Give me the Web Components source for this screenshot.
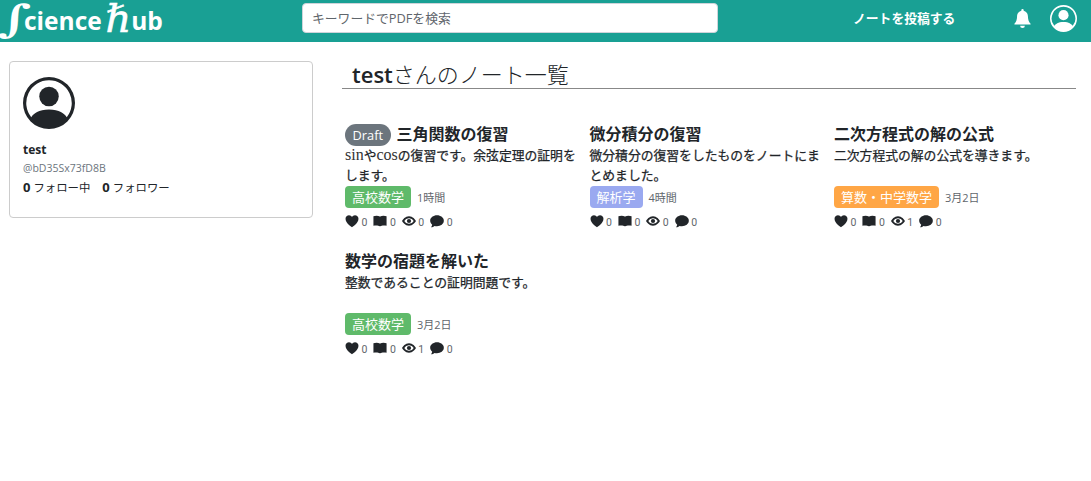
<!DOCTYPE html>
<html lang="ja"><head><meta charset="utf-8"><style>
html,body{margin:0;padding:0;background:#fff}
body{font-family:"Open Sans","Noto Sans CJK JP",sans-serif;color:#212529;width:1091px;height:481px;overflow:hidden}
</style></head><body>
<app-shell>
<app-navbar slot="nav"></app-navbar>
<profile-card slot="side"></profile-card>
<note-list slot="main" heading-name="test">
<note-card draft title-text="三角関数の復習" tag="高校数学" tagc="#5fba6a" time="1時間" views="0" serif>sinやcosの復習です。余弦定理の証明をします。</note-card>
<note-card title-text="微分積分の復習" tag="解析学" tagc="#9aa9f0" time="4時間" views="0">微分積分の復習をしたものをノートにまとめました。</note-card>
<note-card title-text="二次方程式の解の公式" tag="算数・中学数学" tagc="#ffa645" time="3月2日" views="1">二次方程式の解の公式を導きます。</note-card>
<note-card title-text="数学の宿題を解いた" tag="高校数学" tagc="#5fba6a" time="3月2日" views="1">整数であることの証明問題です。</note-card>
</note-list>
</app-shell>
<script>
const CJK='"Noto Sans CJK JP"';
const SANS=`"Open Sans",${CJK},sans-serif`;
const I={
heart:'<path d="M8 15S.6 10.600.6 5.400C.6 3 2.500 1.400 4.600 1.400 6.100 1.400 7.300 2.200 8 3.400 8.700 2.200 9.900 1.400 11.400 1.400 13.500 1.400 15.400 3 15.400 5.400 15.400 10.600 8 15 8 15z"/>',
book:'<path d="M.5 2.500C2.500 1.700 6 1.500 7.700 2.800 7.900 2.900 8.100 2.900 8.300 2.800 10 1.500 13.500 1.700 15.500 2.500V13.500C13.500 12.800 10 12.800 8.300 13.900H7.700C6 12.800 2.500 12.800.5 13.500Z"/>',
eye:'<path fill-rule="evenodd" d="M8 2.600C12.300 2.600 15.200 6.500 16 8 15.200 9.500 12.300 13.400 8 13.400S.8 9.500 0 8C.8 6.500 3.700 2.600 8 2.600ZM8 4.800A5.800 5.800 0 0 0 2.600 8 5.800 5.800 0 0 0 8 11.200 5.800 5.800 0 0 0 13.400 8 5.800 5.800 0 0 0 8 4.800Z"/><circle cx="8" cy="8" r="2.400"/>',
chat:'<path d="M8 1.500C12.200 1.500 15.800 4.200 15.800 7.800S12.200 14 8 14C7 14 6 13.900 5.200 13.600 4.200 14.400 2.800 15 1.200 15 1.800 14.200 2.400 13.200 2.500 12.200 1 11.100.2 9.500.2 7.800.2 4.200 3.800 1.500 8 1.500Z"/>',
bell:'<path d="M8 16a2 2 0 0 0 2-2H6a2 2 0 0 0 2 2zM8 1.900C8.500 1.900 9 1.500 9 1A1 1 0 0 0 7 1C7 1.500 7.500 1.900 8 1.900ZM8 1.500C5.200 1.500 3.400 3.700 3.400 6.500 3.400 8.500 2.800 10.900 1.200 12.500V13H14.800V12.500C13.200 10.900 12.600 8.500 12.600 6.500 12.600 3.700 10.800 1.500 8 1.500Z"/>',
user:'<path d="M11 6a3 3 0 1 1-6 0 3 3 0 0 1 6 0z"/><path fill-rule="evenodd" d="M0 8a8 8 0 1 1 16 0A8 8 0 0 1 0 8zm8-7a7 7 0 0 0-5.468 11.37C3.242 11.226 4.805 10 8 10s4.757 1.225 5.468 2.370A7 7 0 0 0 8 1z"/>'
};
const svg=(n,s,extra='')=>`<svg width="${s}" height="${s}" viewBox="0 0 16 16" fill="currentColor" ${extra}>${I[n]}</svg>`;
function def(name,fn){customElements.define(name,class extends HTMLElement{connectedCallback(){if(this.shadowRoot)return;const r=this.attachShadow({mode:'open'});r.innerHTML=fn(this);}});}

def('app-shell',()=>`<style>
:host{display:block}
.body{display:flex;align-items:flex-start;padding-top:19px}
.side{width:304px;margin-left:9px;flex:none}
.main{width:734px;margin-left:29px;flex:none}
</style><slot name="nav"></slot><div class="body"><div class="side"><slot name="side"></slot></div><div class="main"><slot name="main"></slot></div></div>`);

def('app-navbar',()=>`<style>
:host{display:flex;align-items:center;height:42px;background:#19a094;color:#fff;font-family:${SANS};position:relative}
.logo{width:302px;flex:none;height:42px;display:flex;align-items:center;white-space:nowrap;font-family:"Open Sans",sans-serif;font-weight:700;font-size:24.500px;line-height:42px;color:#fff}
.s{font-family:"DejaVu Serif",serif;font-size:38px;font-weight:700;display:inline-block;line-height:38px;margin-left:3px;margin-right:-2px;transform:translateY(-2px) scaleX(1.5)}
.c{margin-left:1px}
.h{font-family:"DejaVu Serif",serif;font-style:italic;font-size:38px;font-weight:400;margin-left:4px;margin-right:1px;display:inline-block;line-height:38px;transform:translateY(-2px) scaleX(1.05);-webkit-text-stroke:.6px #fff}
.search{flex:none;box-sizing:border-box;width:416px;height:30px;margin-top:-6px;background:#fff;border:1px solid #ced4da;border-radius:4px;padding:0 9px;font-size:12.800px;line-height:28px;color:#5f666c}
.post{flex:none;margin-left:135px;margin-top:-8px;width:102px;font-size:12.800px;font-weight:700;white-space:nowrap}
.bell{margin-left:58px;flex:none;display:flex;margin-top:-5px}
.user{margin-left:18px;flex:none;display:flex;margin-top:-5px}
</style>
<div class="logo"><span class="s">∫</span><span class="c">cience</span><span class="h">ℏ</span><span>ub</span></div>
<div class="search">キーワードでPDFを検索</div>
<div class="post">ノートを投稿する</div>
<div class="bell">${svg('bell',19)}</div>
<div class="user">${svg('user',27)}</div>`);

def('profile-card',()=>`<style>
:host{display:block;box-sizing:border-box;height:157px;border:1px solid #ccc;border-radius:4px;padding:15px 13px;font-family:${SANS}}
.av{display:block;height:52px;color:#212529}
svg{display:block}
.n{margin-top:13px;font-size:12px;font-weight:700;line-height:16px}
.h{margin-top:2px;font-size:10.500px;color:#6c757d;line-height:16px}
.f{margin-top:2px;font-size:11.400px;line-height:18px;display:flex;gap:12px}
b{font-weight:700;font-size:13px}
</style>
<div class="av">${svg('user',52)}</div>
<div class="n">test</div>
<div class="h">@bD35Sx73fD8B</div>
<div class="f"><span><b>0</b> フォロー中</span><span><b>0</b> フォロワー</span></div>`);

def('note-list',h=>`<style>
:host{display:block;font-family:${SANS}}
h1{margin:0;padding:0 0 0 10px;font-weight:300;font-size:22px;line-height:27px;border-bottom:1px solid #888;color:#212529}
h1 b{font-weight:600}
.grid{display:grid;grid-template-columns:repeat(3,244.500px);margin:33px 0 0 3px;grid-auto-rows:127px}
</style><h1><b>${h.getAttribute('heading-name')}</b>さんのノート一覧</h1><div class="grid"><slot></slot></div>`);

def('note-card',c=>{
const g=a=>c.getAttribute(a);
const st=(n,v,w)=>`<span class="st">${svg(n,w)}<i>${v}</i></span>`;
const txt=c.textContent;
const body=c.hasAttribute('serif')?txt.replace(/(sin|cos)/g,'<span class="lat">$1</span>'):txt;
return `<style>
:host{display:block;box-sizing:border-box;font-family:${SANS};padding-right:8px}
.t{display:flex;align-items:center;height:22px;font-size:16px;font-weight:700;white-space:nowrap;color:#212529}
.d{display:inline-block;align-self:flex-start;margin-top:2px;background:#6c757d;color:#fff;border-radius:11px;font-size:12.800px;font-weight:400;line-height:22px;padding:0 7.500px;margin-right:6px}
.b{font-size:12.800px;font-weight:400;-webkit-text-stroke:.25px #212529;line-height:20px;height:40px;margin-top:1px;color:#212529;width:236px}
.lat{font-family:"Liberation Serif",serif;font-weight:400;font-size:16px;line-height:16px;-webkit-text-stroke:0;color:#333}
.m{display:flex;align-items:center;height:22px;margin-top:1px}
.tag{color:#fff;border-radius:4px;font-size:13px;line-height:22px;padding:0 7px;margin-right:6px;background:${g('tagc')}}
.time{font-size:11px;color:#5f666c}
.s{display:flex;align-items:center;margin-top:5px;height:16px;color:#212529}
.st{display:inline-flex;align-items:center;margin-right:6px}
i{font-style:normal;font-family:Roboto,sans-serif;font-size:10.500px;color:#5f666c;margin-left:2.500px;position:relative;top:1px}
svg{display:block}
</style>
<div class="t">${c.hasAttribute('draft')?'<span class="d">Draft</span>':''}${g('title-text')}</div>
<div class="b">${body}</div>
<div class="m"><span class="tag">${g('tag')}</span><span class="time">${g('time')}</span></div>
<div class="s">${st('heart',0,14)}${st('book',0,14)}${st('eye',g('views'),14)}${st('chat',0,14)}</div>`;
});
</script>
</body></html>
